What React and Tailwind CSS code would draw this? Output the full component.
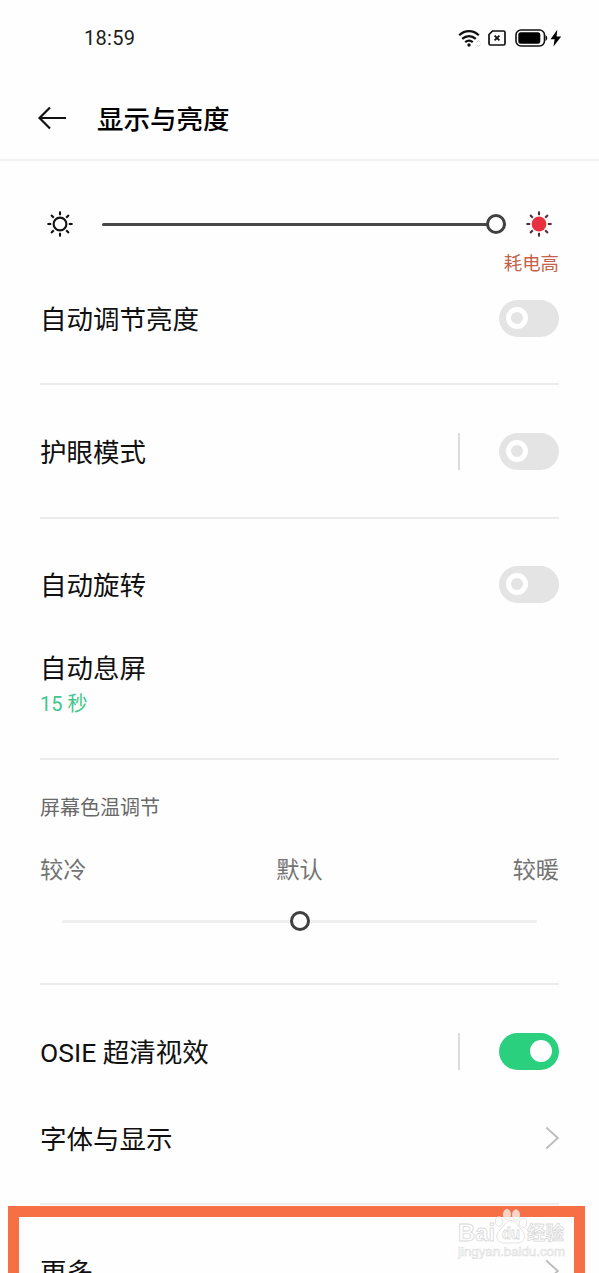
const RAYS = [0, 45, 90, 135, 180, 225, 270, 315];

const SunIcon = ({ className, filled }) => (
    <svg viewBox="0 0 26 26" className={`h-[26px] w-[26px] shrink-0 ${className}`} fill="none">
        {filled ? (
            <circle cx="13" cy="13" r="7.4" fill="#e8303f" />
        ) : (
            <circle cx="13" cy="13" r="6.4" stroke="currentColor" strokeWidth="2.1" />
        )}
        {RAYS.map((angle) => (
            <path
                key={angle}
                d="M13 0.4V4.2"
                stroke="currentColor"
                strokeWidth="2.1"
                transform={`rotate(${angle} 13 13)`}
            />
        ))}
    </svg>
);

const StatusIcons = () => (
    <div className="flex items-center">
        <svg viewBox="0 0 24 20" className="h-5 w-6" fill="none" stroke="#111" strokeWidth="2.2">
            <path d="M1.2 7.3C6.9 1.8 15.1 1.8 20.8 7.3" />
            <path d="M4.2 10.9C8.2 7.1 13.8 7.1 17.8 10.9" />
            <path d="M7.2 14.2C9.6 12.1 12.4 12.1 14.8 14.2" />
            <circle cx="11" cy="17" r="1.7" fill="#111" stroke="none" />
            <path d="M18.6 14.5L20.4 12.5L22.2 14.5M18.6 16.5L20.4 18.5L22.2 16.5" stroke="#ccc" strokeWidth="1" />
        </svg>
        <svg viewBox="0 0 18 16" className="ml-[6px] h-4 w-[18px]" fill="none" stroke="#111">
            <path d="M4.5 1H15.5Q17 1 17 2.5V13.5Q17 15 15.5 15H2.5Q1 15 1 13.5V4.5Z" strokeWidth="1.7" />
            <path d="M6.6 5.6L11.4 10.4M11.4 5.6L6.6 10.4" strokeWidth="1.8" />
        </svg>
        <svg viewBox="0 0 47 18" className="ml-[9px] h-[18px] w-[47px]" fill="none">
            <rect x="1" y="1" width="28.5" height="16" rx="5" stroke="#111" strokeWidth="1.6" />
            <rect x="3.3" y="3.3" width="22" height="11.4" rx="2.5" fill="#000" />
            <path d="M30.5 6Q32.3 7 32.3 9Q32.3 11 30.5 12Z" fill="#111" />
            <path d="M42.3 0.8L35.5 10.2H39.6L38.5 17.5L46.2 7.6H41.6Z" fill="#000" />
        </svg>
    </div>
);

const Toggle = ({ on }) => (
    <div
        className={`flex h-[37px] w-[60px] shrink-0 items-center rounded-full ${
            on ? 'justify-end bg-[#2bd07f] pr-[7px]' : 'bg-[#e4e4e4] pl-[7px]'
        }`}
    >
        <div className={`h-[22px] w-[22px] rounded-full ${on ? 'bg-white' : 'border-[5px] border-white'}`} />
    </div>
);

const Chevron = () => (
    <svg viewBox="0 0 14 24" className="h-6 w-[14px]" fill="none" stroke="#bdbdbd" strokeWidth="1.8">
        <path d="M1.2 1.5L12.8 12L1.2 22.5" />
    </svg>
);

const Divider = ({ className = '' }) => <div className={`h-[2px] bg-[#ececec] ${className}`} />;

const Row = ({ label, className, separated, children }) => (
    <div className={`flex items-center text-[26.5px] text-[#101010] ${className}`}>
        <span className="flex-1 whitespace-pre pt-[3px]">{label}</span>
        {separated && <div className="mr-[39px] h-[37px] w-[2px] bg-[#dcdcdc]" />}
        {children}
    </div>
);

const Knob = ({ className }) => (
    <div className={`absolute top-0 h-5 w-5 rounded-full border-[3px] border-[#404040] bg-white ${className}`} />
);

const Watermark = () => (
    <svg
        viewBox="0 0 112 52"
        className="absolute left-[456px] top-[1207px] h-[52px] w-[112px]"
        fill="#fff"
        fillOpacity="0.7"
        stroke="#dadada"
        strokeWidth="0.8"
    >
        <g fontFamily="Liberation Sans, Noto Sans CJK SC, sans-serif" fontWeight="bold">
            <text x="2" y="34" fontSize="23" textLength="37" lengthAdjust="spacingAndGlyphs">Bai</text>
            <text x="71" y="33" fontSize="19" textLength="37" lengthAdjust="spacingAndGlyphs">经验</text>
        </g>
        <ellipse cx="43" cy="14.5" rx="3.8" ry="4.8" />
        <ellipse cx="51" cy="7.5" rx="3.6" ry="5.3" />
        <ellipse cx="60" cy="8" rx="3.6" ry="5.3" />
        <ellipse cx="67" cy="16" rx="3.8" ry="4.8" />
        <path d="M55 13.5C60 13.5 61 18 65 22C71 28 69 36 61 36H48C40 35 38 28 45 22C49 18 50 13.5 55 13.5Z" />
        <g fontFamily="Liberation Sans, sans-serif">
            <text x="46" y="32" fontSize="16" fontWeight="bold" textLength="18" lengthAdjust="spacingAndGlyphs">du</text>
            <text x="2" y="48.5" fontSize="12" strokeWidth="0.5" textLength="107" lengthAdjust="spacingAndGlyphs">
                jingyan.baidu.com
            </text>
        </g>
    </svg>
);

export default function App() {
    return (
        <div className="relative h-[1273px] w-[599px] overflow-hidden bg-[#fefefe] font-[Roboto,'Noto_Sans_CJK_SC',sans-serif]">
            <div className="flex h-[76px] items-center justify-between pl-[84px] pr-[37px] text-[20px] text-[#1c1c1c]">
                <span className="tracking-[0.3px]">18:59</span>
                <StatusIcons />
            </div>
            <header className="flex h-[85px] items-center border-b-2 border-[#f2f2f2] pl-[38px]">
                <svg viewBox="0 0 28 24" className="h-6 w-7" fill="none" stroke="#111" strokeWidth="2.2">
                    <path d="M12 1.5L1.5 12L12 22.5M1.5 12H28" />
                </svg>
                <h1 className="ml-[31px] pt-[5px] text-[26.5px] font-medium text-black">显示与亮度</h1>
            </header>

            <main className="px-10">
                <div className="flex items-center pl-[7px] pr-[7px] pt-[50px]">
                    <SunIcon className="text-[#111]" />
                    <div className="relative ml-[29px] mr-[20px] flex h-5 flex-1 items-center">
                        <div className="h-[3px] w-full rounded-full bg-[#484848]" />
                        <Knob className="right-0" />
                    </div>
                    <SunIcon filled className="text-[#4d3038]" />
                </div>
                <p className="mt-[15px] h-[23px] text-right text-[18.4px] leading-6 text-[#c4614b]">耗电高</p>
                <Row label="自动调节亮度" className="h-[86px]">
                    <Toggle />
                </Row>
                <Divider className="mt-[22px]" />

                <Row label="护眼模式" className="h-[132px]" separated>
                    <Toggle />
                </Row>
                <Divider />

                <Row label="自动旋转" className="h-[130px]">
                    <Toggle />
                </Row>
                <Row label="自动息屏" className="h-9" />
                <p className="h-9 text-[20px] leading-[38px] text-[#3fc68a]">15 秒</p>
                <Divider className="mt-[37px]" />

                <p className="mt-[36px] h-[23px] text-[20px] leading-6 text-[#696969]">屏幕色温调节</p>
                <div className="mt-[37px] flex h-7 justify-between text-[23.2px] leading-7 text-[#747474]">
                    <span>较冷</span>
                    <span>默认</span>
                    <span>较暖</span>
                </div>
                <div className="relative mx-[22px] mt-[27px] flex h-5 items-center">
                    <div className="h-[3px] w-full rounded-full bg-[#efefef]" />
                    <Knob className="left-1/2 -translate-x-1/2" />
                </div>
                <Divider className="mt-[52px]" />

                <Row label="OSIE 超清视效" className="h-[132px]" separated>
                    <Toggle on />
                </Row>
                <Row label="字体与显示" className="h-[42px]">
                    <Chevron />
                </Row>
                <Divider className="mt-[44px]" />
                <Row label="更多" className="h-[132px]">
                    <Chevron />
                </Row>
            </main>

            <div className="absolute left-[8px] top-[1206px] h-[90px] w-[577px] border-[11px] border-[#f66f45]" />
            <Watermark />
        </div>
    );
}
